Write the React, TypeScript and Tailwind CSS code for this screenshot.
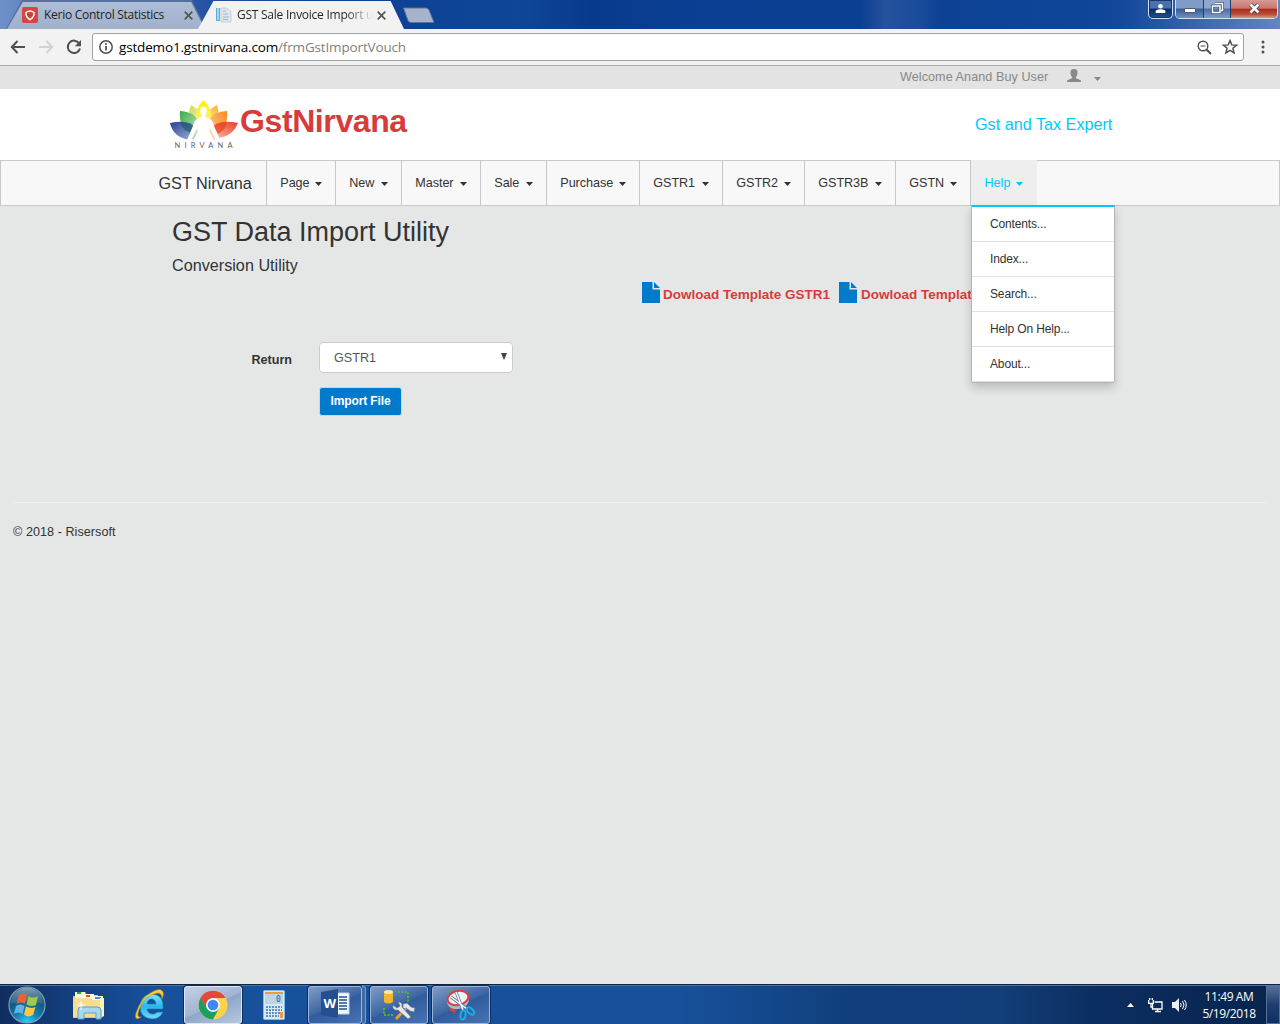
import React from "react";

function Caret({ className = "" }: { className?: string }) {
  return (
    <svg width="7" height="4" viewBox="0 0 7 4" className={className}>
      <path d="M0 0H7L3.5 4Z" fill="currentColor" />
    </svg>
  );
}

function Close() {
  return (
    <svg width="9" height="9" viewBox="0 0 9 9" className="mt-px shrink-0">
      <path d="M.7.7 8.3 8.3M8.3.7.7 8.3" stroke="#555" strokeWidth="1.7" />
    </svg>
  );
}

function TabStrip() {
  return (
    <div className="relative flex h-[29px] items-start overflow-hidden bg-[linear-gradient(90deg,#6f91c9_0px,#5c82c0_30px,#2a56a5_190px,#0e4296_300px,#0d4294_420px,#0f4796_520px,#083a8b_590px,#0a3f93_700px,#0b3f91_860px,#25519f_885px,#1b4b9b_920px,#0c4193_940px,#0e4598_1060px,#12479a_1120px,#4a73b2_1230px,#6385bb_1280px)]">
      <div className="ml-[6px] h-[29px] w-[200px] bg-[#54709d] p-px [clip-path:polygon(8%_0,93%_0,100%_100%,0_100%)]">
        <div className="flex h-[28px] items-center bg-[linear-gradient(180deg,#afbed7,#a1b0cb)] pl-[15px] [clip-path:polygon(8%_1px,93%_1px,100%_100%,0_100%)]">
          <svg width="16" height="16" viewBox="0 0 16 16">
            <rect width="16" height="16" rx="2" fill="#d64541" />
            <path d="M4 5.5Q8 2.5 12 5.5V8Q11 11 8 12.8 5 11 4 8Z" fill="#d64541" stroke="#fff" strokeWidth="1.4" />
            <path d="M6.5 7.5 8 9l1.500-1.500" stroke="#b92e30" fill="none" />
          </svg>
          <span className="ml-[6px] w-[140px] whitespace-nowrap font-['Open_Sans',sans-serif] text-[12px] tracking-[-0.270px] text-[#222]">Kerio Control Statistics</span>
          <Close />
        </div>
      </div>
      <div className="ml-[-8px] h-[29px] w-[206px] bg-[#f2f2f2] [clip-path:polygon(7.500%_1px,93.500%_1px,100%_100%,0_100%)]">
        <div className="flex h-[29px] items-center pl-[18px]">
          <svg width="16" height="16" viewBox="0 0 16 16" className="mt-px">
            <path d="M0 1h4v13H0Z" fill="#5aaedb" />
            <path d="M1 1h2v12H1Z" fill="#a4d4ef" />
            <path d="M5 1h6l4 4v10H5Z" fill="#dfe6ec" stroke="#bccbd6" strokeWidth=".8" />
            <path d="M7 4h3M7 7h5M7 10h6M7 12.500h5" stroke="#9fb6c8" />
          </svg>
          <span className="ml-[4px] mt-px w-[141px] overflow-hidden whitespace-nowrap bg-[linear-gradient(90deg,#222_110px,#f2f2f2_137px)] bg-clip-text pl-px font-['Open_Sans',sans-serif] text-[12px] tracking-[-0.250px] text-transparent">GST Sale Invoice Import u</span>
          <Close />
        </div>
      </div>
      <svg width="34" height="17" viewBox="0 0 34 17" className="ml-[-2px] mt-[7px]">
        <path d="M1.500 1H24Q26 1 27 3L32 15.500H9Q7 15.500 6 13.500Z" fill="#a7b3ca" stroke="#5c749d" />
      </svg>
      <div className="ml-auto mr-[2px] flex h-[19px]">
        <div className="mr-[2px] flex w-[25px] items-center justify-center rounded-b-[5px] border border-t-0 border-[#d2deef] bg-[linear-gradient(#4b70ad_45%,#062c6c_50%,#26508f)] pb-[2px] shadow-[inset_0_0_0_1px_#18376a]">
          <svg width="11" height="11" viewBox="0 0 11 11"><circle cx="5.500" cy="3.200" r="2.300" fill="#fff" /><path d="M.7 10V7.500Q5.500 5 10.300 7.500V10Z" fill="#fff" /></svg>
        </div>
        <div className="flex overflow-hidden rounded-b-[5px] border border-t-0 border-[#d2deef]">
          <div className="flex w-[28px] items-center justify-center border-r border-[#213d6d] bg-[linear-gradient(#7f9bc8_45%,#365b97_50%,#6e91c1)]">
            <div className="mt-[3px] h-[5px] w-[12px] rounded-[1px] border border-[#4c5972] bg-white" />
          </div>
          <div className="flex w-[27px] items-center justify-center border-r border-[#213d6d] bg-[linear-gradient(#8fa7cf_45%,#4b6da3_50%,#809dca)] pb-[2px]">
            <svg width="13" height="12" viewBox="0 0 13 12"><path d="M4 1.500h7.500v7H10M1.500 4H9v6.500H1.500Z" fill="none" stroke="#45526b" strokeWidth="3" /><path d="M4 1.500h7.500v7H10M1.500 4H9v6.500H1.500Z" fill="none" stroke="#fff" strokeWidth="1.500" /></svg>
          </div>
          <div className="flex w-[46px] items-center justify-center bg-[linear-gradient(#d59a95_0%,#c87870_45%,#b12b18_52%,#b9503d_80%,#d1a07c)] pb-[2px]">
            <svg width="13" height="11" viewBox="0 0 13 11"><path d="m2.500 1.500 8 8m0-8-8 8" stroke="#54404a" strokeWidth="4.300" /><path d="m2.500 1.500 8 8m0-8-8 8" stroke="#fff" strokeWidth="2.500" /></svg>
          </div>
        </div>
      </div>
    </div>
  );
}

function Toolbar() {
  return (
    <div className="flex h-[37px] items-center border-b border-[#acacac] bg-[#f2f2f2] pl-[10px]">
      <svg width="16" height="14" viewBox="0 0 16 14"><path d="M7.500 1 1.800 7l5.700 6M2 7h13" fill="none" stroke="#505050" strokeWidth="2" /></svg>
      <svg width="16" height="14" viewBox="0 0 16 14" className="ml-[12px]"><path d="m8.500 1 5.700 6-5.700 6M14 7H1" fill="none" stroke="#d2d2d2" strokeWidth="2" /></svg>
      <svg width="16" height="16" viewBox="0 0 16 16" className="ml-[12px]"><path d="M13.200 4.400A6.200 6.200 0 1 0 14 9.500" fill="none" stroke="#505050" strokeWidth="2" /><path d="M15 1v6.200H8.800Z" fill="#505050" /></svg>
      <div className="ml-[10px] flex h-[28px] w-[1152px] items-center rounded-[3px] border border-[#a3a3a3] bg-white pl-[6px] pr-[5px]">
        <svg width="14" height="14" viewBox="0 0 14 14"><circle cx="7" cy="7" r="6.200" fill="none" stroke="#505050" strokeWidth="1.500" /><path d="M7 6v4.500" stroke="#505050" strokeWidth="1.800" /><circle cx="7" cy="3.900" r="1" fill="#505050" /></svg>
        <span className="ml-[6px] whitespace-nowrap font-['Open_Sans',sans-serif] text-[13.500px] tracking-[-0.160px] text-black">gstdemo1.gstnirvana.com<span className="text-[#808080]">/frmGstImportVouch</span></span>
        <svg width="15" height="15" viewBox="0 0 15 15" className="ml-auto"><circle cx="6" cy="6" r="4.800" fill="none" stroke="#505050" strokeWidth="1.400" /><path d="M3.500 6h5" stroke="#505050" /><path d="m9.500 9.500 4.500 4.500" stroke="#505050" strokeWidth="2" /></svg>
        <svg width="16" height="16" viewBox="0 0 16 16" className="ml-[10px]"><path d="m8 1.500 1.800 4.400 4.700.3-3.600 3 1.200 4.700L8 11.300l-4.100 2.600 1.200-4.700-3.600-3 4.700-.3Z" fill="none" stroke="#505050" strokeWidth="1.500" /></svg>
      </div>
      <svg width="4" height="14" viewBox="0 0 4 14" className="ml-[17px]"><g fill="#505050"><circle cx="2" cy="2" r="1.500" /><circle cx="2" cy="7" r="1.500" /><circle cx="2" cy="12" r="1.500" /></g></svg>
    </div>
  );
}

function Lotus() {
  return (
    <svg width="70" height="54" viewBox="0 0 70 54">
      <defs>
        <linearGradient id="blue" x1="0" y1="0" x2="1" y2="1"><stop stopColor="#253f96" /><stop offset="1" stopColor="#a9b5d9" /></linearGradient>
        <linearGradient id="green" x1="0" y1="0" x2="1" y2="1"><stop stopColor="#38a848" /><stop offset="1" stopColor="#d9efcf" /></linearGradient>
        <linearGradient id="lime" x1="0" y1="0" x2="1" y2="1"><stop stopColor="#cddc4f" /><stop offset="1" stopColor="#f5f7cf" /></linearGradient>
        <linearGradient id="yellow" x1="0" y1="0" x2="0" y2="1"><stop stopColor="#fff000" /><stop offset="1" stopColor="#fbf09b" /></linearGradient>
        <linearGradient id="amber" x1="1" y1="0" x2="0" y2="1"><stop stopColor="#fcb22a" /><stop offset="1" stopColor="#fff0ba" /></linearGradient>
        <linearGradient id="orange" x1="1" y1="0" x2="0" y2="1"><stop stopColor="#f68a1d" /><stop offset="1" stopColor="#fdd7a7" /></linearGradient>
        <linearGradient id="red" x1="1" y1="0" x2="0" y2="1"><stop stopColor="#e93b24" /><stop offset="1" stopColor="#fac2ac" /></linearGradient>
      </defs>
      <path d="M22 7Q35 13 33 30L25 33Q17 18 22 7Z" fill="url(#lime)" />
      <path d="M48 7Q34 13 37 30L45 33Q52 18 48 7Z" fill="url(#amber)" />
      <path d="M34.500 2Q45 12 41 24L34.500 29 28 24Q24 12 34.500 2Z" fill="url(#yellow)" />
      <path d="M11 13Q30 14 30 30L25 42Q9 30 11 13Z" fill="url(#green)" />
      <path d="M58 13Q39 14 39 30L45 42Q60 30 58 13Z" fill="url(#orange)" />
      <path d="M1 25Q22 21 27 31L20 42Q4 39 1 25Z" fill="url(#blue)" />
      <path d="M69 25Q48 21 42 31L50 40Q64 38 69 25Z" fill="url(#red)" />
      <path d="M11 24Q21 23 26 30L24 35Q14 34 11 24Z" fill="#185765" opacity=".65" />
      <path d="M58 24Q48 23 43 30L47 36Q56 34 58 24Z" fill="#e83e16" opacity=".65" />
      <ellipse cx="34.500" cy="13" rx="3.300" ry="4.200" fill="#fff" />
      <path d="M33 16H36Q36 20 40 20.500 44 22 45 28L51 41H46L41 31Q39 34 40 37L34.500 35 29 37Q30 34 28 31L22 42H18L24 28Q25 22 29 20.500 33 20 33 16Z" fill="#fff" />
      <text x="5.500" y="50" fontFamily="Lato" fontSize="7.500" textLength="58" fill="#666">NIRVANA</text>
    </svg>
  );
}

const menus = [
  { label: "Page", width: "w-[69px]" },
  { label: "New", width: "w-[66px]" },
  { label: "Master", width: "w-[79px]" },
  { label: "Sale", width: "w-[66px]" },
  { label: "Purchase", width: "w-[93px]" },
  { label: "GSTR1", width: "w-[83px]" },
  { label: "GSTR2", width: "w-[82px]" },
  { label: "GSTR3B", width: "w-[91px]" },
  { label: "GSTN", width: "w-[75px]" },
];

function Nav() {
  return (
    <nav className="flex h-[46px] border border-[#c8c8c8] bg-[#f8f8f8] text-[12.600px] text-[#333]">
      <div className="w-[266px] border-r border-[#c8c8c8] pl-[157.500px] pt-[10px] text-[16.200px] leading-[24px]">GST Nirvana</div>
      {menus.map((m) => (
        <div key={m.label} className={`${m.width} flex justify-between border-r border-[#c8c8c8] pl-[13.300px] pr-[13.500px] pt-[13px] leading-[18px] tracking-[-0.050px]`}>
          {m.label}<Caret className="mt-[8px]" />
        </div>
      ))}
      <div className="relative -mt-px flex h-[45px] w-[66px] bg-[#eee] pl-[13.500px] pt-[14px] leading-[18px] text-[#00c8ff]">
        Help<Caret className="ml-[5.500px] mt-[8px]" />
        <div className="absolute left-0 top-[45px] z-10 w-[144px] rounded-b-[2px] border border-t-2 border-[#b3b5b5] border-t-[#00c8ff] bg-white text-[12px] tracking-[-0.150px] text-[#333] shadow-[0_5px_10px_rgba(0,0,0,0.18)]">
          {["Contents...", "Index...", "Search...", "Help On Help...", "About..."].map((x) => (
            <div key={x} className="h-[35px] border-b border-[#e2e2e2] pl-[18px] pt-[8px] leading-[18px]">{x}</div>
          ))}
        </div>
      </div>
    </nav>
  );
}

function FileIcon() {
  return (
    <svg width="18" height="21" viewBox="0 0 18 21" className="shrink-0">
      <path d="M0 0H10.500V7.500H18V21H0ZM12 0l6 6H12Z" fill="#007acc" />
    </svg>
  );
}

function Page() {
  return (
    <main className="flex-1 bg-[#e5e7e6] text-[#333]">
      <h1 className="pl-[172px] pt-[10px] text-[27px] leading-[32px]">GST Data Import Utility</h1>
      <h2 className="mt-[7px] pl-[172px] text-[16.200px] leading-[20px]">Conversion Utility</h2>
      <div className="ml-[642px] mt-[7px] flex h-[22px] w-[420px] whitespace-nowrap text-[13.500px] font-bold leading-[26px] text-[#d93b3b]">
        <FileIcon /><span className="ml-[3px] w-[176px]">Dowload Template GSTR1</span>
        <FileIcon /><span className="ml-[4px]">Dowload Templat</span>
      </div>
      <div className="mt-[38px] flex">
        <label className="w-[319px] pr-[27px] pt-[9px] text-right text-[12.600px] font-bold leading-[18px]">Return</label>
        <div className="flex h-[31px] w-[194px] items-center rounded-[4px] border border-[#ccc] bg-white pl-[14px] pr-[5px] text-[12.600px] text-[#555]">
          <span className="pt-px">GSTR1</span>
          <svg width="6" height="7" viewBox="0 0 6 7" className="ml-auto mb-[2px]"><path d="M0 0h6L3 7Z" fill="#444" /></svg>
        </div>
      </div>
      <button className="ml-[319px] mt-[14px] block h-[29px] w-[83px] rounded-[3px] border border-[#c7d9e6] bg-[#007acc] pb-px text-[12px] font-bold tracking-[-0.120px] text-white">Import File</button>
      <hr className="mx-[13px] mt-[86px] border-[#eee]" />
      <footer className="pl-[13px] pt-[20px] text-[12.600px] leading-[18px] tracking-[0.050px]">© 2018 - Risersoft</footer>
    </main>
  );
}

function ChromeLogo() {
  return (
    <svg width="30" height="30" viewBox="0 0 30 30">
      <circle cx="15" cy="15" r="14.500" fill="#ffd24c" />
      <path d="M2.400 8A14.500 14.500 0 0 1 27.600 8H15L8.500 18.500Z" fill="#dc4b3e" />
      <path d="M2.400 8A14.500 14.500 0 0 0 15 29.500L21 18.500H9Z" fill="#1aa15f" />
      <circle cx="15" cy="15" r="7" fill="#f6f6f6" /><circle cx="15" cy="15" r="5.300" fill="#4285f4" />
    </svg>
  );
}

const taskTile = "flex h-[38px] items-center justify-center rounded-[3px] border border-[#9ab7da] bg-[linear-gradient(155deg,#809cc7,#3e67a3_48%,#315d9e_52%,#4773b3)] shadow-[0_0_0_1px_#102d60]";

function Taskbar() {
  return (
    <div className="flex h-10 items-center border-t border-[#14243e] bg-[linear-gradient(90deg,#102e5f_0px,#143f80_70px,#17509b_150px,#17509b_680px,#113f7c_850px,#123e79_1000px,#0b2d5f_1100px,#08244e_1280px)] pt-px shadow-[inset_0_1px_#4d72a4]">
      <svg width="40" height="38" viewBox="0 0 40 38" className="ml-[7px]">
        <defs>
          <radialGradient id="orb" cx=".5" cy="1" r=".9"><stop stopColor="#25d9ff" /><stop offset=".35" stopColor="#1785b8" /><stop offset="1" stopColor="#0d3a62" /></radialGradient>
          <linearGradient id="orbGloss" x1="0" y1="0" x2="0" y2="1"><stop stopColor="#b9d1df" /><stop offset="1" stopColor="#6e98af" stopOpacity=".4" /></linearGradient>
        </defs>
        <circle cx="20" cy="19" r="18" fill="url(#orb)" stroke="#819eb4" strokeWidth="1.200" />
        <path d="M3.500 18A16.500 16.500 0 0 1 36.500 18Q20 13 3.500 18Z" fill="url(#orbGloss)" opacity=".7" />
        <path d="M12 9Q16 6 20 9L18 18Q14 15 9.500 18Z" fill="#ef6033" />
        <path d="M21.500 10Q26 13 31 10L29 19Q24 21 19.500 18.500Z" fill="#a1ca45" />
        <path d="M9 20Q13 17 17.500 20L15.500 28Q11 25 7 28Z" fill="#62b2e9" />
        <path d="M19 20.500Q24 23 28.500 21L26 29Q21 32 17 28.500Z" fill="#ffc93f" />
      </svg>
      <svg width="34" height="34" viewBox="0 0 34 34" className="ml-[25px]">
        <path d="M1 8h2V4h10l2 3h11v3h6v18l-3 2H1Z" fill="#e4c470" />
        <path d="M3 4h10v6H3Z" fill="#fff8d4" /><path d="M5 4h4v2H5Z" fill="#16a83c" />
        <path d="M11 6h11v5H11Z" fill="#fffbe4" /><path d="M14 7h4v2h-4Z" fill="#e04f31" />
        <path d="M20 8h11v4H20Z" fill="#fffbe4" /><path d="M23 9h6v2h-6Z" fill="#3f9ad8" />
        <path d="M1 10h17l2 2h8v17H1Z" fill="#f5dd94" /><path d="M28 10h4v18l-4 1Z" fill="#fff0b4" />
        <path d="M6 31V22q0-3 3-3h16q4 0 4 3v9h-5v-6H12v6Z" fill="#a6d9ef" stroke="#639fc4" />
        <path d="M9 13v9M5 17h8" stroke="#fff" strokeOpacity=".9" /><path d="M7 15l4 4M11 15l-4 4" stroke="#fff" strokeOpacity=".6" />
      </svg>
      <svg width="34" height="34" viewBox="0 0 34 34" className="ml-[28px]">
        <defs><linearGradient id="ie" x1="0" y1="0" x2="0" y2="1"><stop stopColor="#83e5ff" /><stop offset=".5" stopColor="#28b7eb" /><stop offset="1" stopColor="#70d9f6" /></linearGradient></defs>
        <path d="M29 21H13q1 5 6 5 3 0 4-2h6q-3 7-11 7Q6 30 6 18.500 7 6 18.500 6 30 7 29 21ZM13 16h9q-1-5-4.500-5T13 16Z" fill="url(#ie)" stroke="#1676ac" strokeWidth=".6" />
        <path d="M7 29Q0 34 2 25 7 10 18 4 27-1 29 4q1 3-1 7 0-6-4-6Q10 7 5 22 2 30 7 29Z" fill="#f8cf3e" stroke="#c28a15" strokeWidth=".6" />
      </svg>
      <div className="ml-[16px] flex h-[38px] w-[58px] items-center justify-center rounded-[3px] border border-[#dde6f2] bg-[linear-gradient(155deg,#c5d1e5,#a0b3d0_50%,#8da6c8_51%,#b8c9df)] shadow-[0_0_0_1px_#102d60]"><ChromeLogo /></div>
      <svg width="22" height="30" viewBox="0 0 22 30" className="ml-[21px]">
        <rect x=".5" y=".5" width="21" height="29" rx="1" fill="#d6e9f6" stroke="#87b9dc" /><path d="M2 2h18v2H2Z" fill="#f19a38" /><rect x="2" y="4" width="18" height="10" fill="#bbd4e9" />
        <text x="13" y="12" fontSize="8" fontFamily="DejaVu Sans Mono" fill="#345e84">0</text>
        <path d="M3 17h16M3 20h16M3 23h16M3 26h13" stroke="#6293bb" strokeWidth="2" strokeDasharray="2 1" /><path d="M17 22h3v6h-3Z" fill="#f19a38" />
      </svg>
      <div className="ml-[23px] flex w-[59px]">
        <div className={`${taskTile} w-[54px]`}>
          <svg width="29" height="29" viewBox="0 0 29 29" className="-mt-[3px]">
            <path d="M14 4h14v21H14Z" fill="#f4f8fd" stroke="#bfd1e8" /><path d="M18 8h8M18 11h8M18 14h8M18 17h8M18 20h8" stroke="#244f91" strokeWidth="1.300" /><path d="M0 3 17 0v29L0 26Z" fill="#254f91" /><text x="2.500" y="19" fontSize="13" fontWeight="bold" fontFamily="Open Sans" fill="#fff">W</text>
          </svg>
        </div>
        <div className="h-[38px] w-[4px] rounded-r-[3px] border border-l-0 border-[#7b9dca] bg-[#42699f]" />
      </div>
      <div className={`${taskTile} ml-[3px] w-[58px]`}>
        <svg width="34" height="34" viewBox="0 0 34 34">
          <path d="M2 4v10q4 3 9 0V4" fill="#efb72f" /><ellipse cx="6.500" cy="4" rx="4.500" ry="2" fill="#ffe89b" />
          <path d="M16 4h10v11M2 20v7h10" fill="none" stroke="#52b52f" strokeWidth="2" strokeDasharray="2 1.500" />
          <path d="m14 31 11-12" stroke="#ed9f27" strokeWidth="3" /><path d="m21 16 4-1 4 4 4 1-1 4-4-1-4-3-3 1Z" fill="#e1e6ed" stroke="#687585" strokeWidth=".7" />
          <path d="M11 17q-1 6 5 5l10 9 3-2-9-10q1-5-4-5l2 4-3 2Z" fill="#e3e8ef" stroke="#697687" strokeWidth=".8" />
        </svg>
      </div>
      <div className={`${taskTile} ml-[4px] w-[58px]`}>
        <svg width="32" height="34" viewBox="0 0 32 34">
          <path d="m5 19 6 3-1 3-6-3Z" fill="#d64145" /><ellipse cx="13" cy="13" rx="11" ry="8" fill="#aab8cb" transform="rotate(-12 13 13)" /><ellipse cx="13" cy="10" rx="10.500" ry="7" fill="#eef2f6" stroke="#d64145" strokeWidth="2" transform="rotate(-12 13 10)" />
          <path d="m6 9 16 12M11 4l7 18" stroke="#647b90" strokeWidth="3" /><path d="m6 9 16 12M11 4l7 18" stroke="#f7f9fc" strokeWidth="1.500" />
          <ellipse cx="18" cy="27" rx="2.500" ry="4.500" fill="none" stroke="#1dace5" strokeWidth="2" transform="rotate(10 18 27)" /><ellipse cx="25.500" cy="23" rx="2.500" ry="4.500" fill="none" stroke="#1dace5" strokeWidth="2" transform="rotate(-45 25.500 23)" />
        </svg>
      </div>
      <div className="ml-auto flex h-[38px] items-center text-white">
        <svg width="7" height="4" viewBox="0 0 7 4" className="mr-[14px]"><path d="M0 4 3.500 0 7 4Z" fill="#fff" /></svg>
        <svg width="15" height="15" viewBox="0 0 15 15"><path d="M6.500 4H14v7H4.500V6" fill="none" stroke="#fff" strokeWidth="1.300" /><path d="M7 13.500h6M9.500 11v2M.7 2v3.300h4.600V2M3 5v4h2M1.700 0v2M4.300 0v2" fill="none" stroke="#fff" strokeWidth="1.300" /></svg>
        <svg width="15" height="14" viewBox="0 0 15 14" className="ml-[9px]"><path d="M0 4h3l4-4v14l-4-4H0Z" fill="#e9edf4" /><path d="M8.500 5q1.500 2 0 4M10.500 3q3 4 0 8M12.500 2q3.500 5 0 10" fill="none" stroke="#fff" /></svg>
        <div className="ml-[13px] w-[58px] text-center font-['Open_Sans',sans-serif] text-[12px] leading-[17px] tracking-[-0.400px]">11:49 AM<br />5/19/2018</div>
        <div className="ml-[8px] h-[38px] w-[14px] border border-[#536f9a] bg-[linear-gradient(#546d95,#1c3d70_50%,#102f61)]" />
      </div>
    </div>
  );
}

export default function App() {
  return (
    <div className="flex h-[1024px] w-[1280px] flex-col overflow-hidden font-['Liberation_Sans',Arial,sans-serif]">
      <TabStrip />
      <Toolbar />
      <div className="flex h-[23px] items-start bg-[#e3e3e3] pl-[900px] text-[12.600px] leading-[22px] text-[#888]">
        <span className="w-[167px] tracking-[0.070px]">Welcome Anand Buy User</span>
        <svg width="14" height="13" viewBox="0 0 14 13" className="mt-[3px]"><path d="M3.500 3Q3.500 0 7 0t3.500 3Q10.500 7 8.800 8v1L14 11.500V13H0V11.500L5.200 9V8Q3.500 7 3.500 3Z" fill="#888" /></svg>
        <Caret className="ml-[13px] mt-[11px]" />
      </div>
      <header className="flex h-[71px] bg-white pl-[169px] pt-[9px]">
        <Lotus />
        <div className="ml-px mt-[5px] w-[735px] text-[32px] font-bold leading-[36px] tracking-[-0.400px] text-[#d93b3b]">GstNirvana</div>
        <div className="mt-[16px] whitespace-nowrap text-[16.200px] leading-[20px] text-[#00c8ff]">Gst and Tax Expert</div>
      </header>
      <Nav />
      <Page />
      <Taskbar />
    </div>
  );
}
